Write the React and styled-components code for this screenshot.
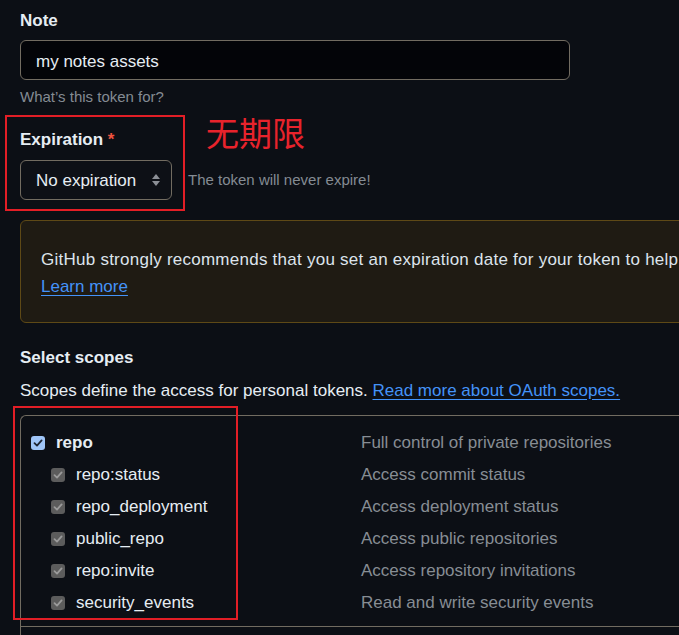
import styled, { createGlobalStyle } from "styled-components"

const GlobalStyle = createGlobalStyle`
    html, body {
        margin: 0;
        padding: 0;
        background: #0c0f15;
        overflow: hidden;
    }
    body {
        font-family: "Liberation Sans", Arial, sans-serif;
        color: #e6edf3;
    }
`;

const scopes = [
    { name: "repo:status", desc: "Access commit status" },
    { name: "repo_deployment", desc: "Access deployment status" },
    { name: "public_repo", desc: "Access public repositories" },
    { name: "repo:invite", desc: "Access repository invitations" },
    { name: "security_events", desc: "Read and write security events" },
]

function Check({ parent }) {
    return (
        <Box parent={parent}>
            <svg width="10" height="10" viewBox="0 0 10 10">
                <path d="M1.5 5.2 L4 7.6 L8.6 2.4" fill="none" stroke={parent ? "#1d2533" : "#9a9a9a"} strokeWidth="1.8" strokeLinecap="round" strokeLinejoin="round" />
            </svg>
        </Box>
    )
}

function App() {
    return (
        <Page>
            <GlobalStyle />
            <Label>Note</Label>
            <Input>my notes assets</Input>
            <Hint>What’s this token for?</Hint>

            <ExpirationRow>
                <Field>
                    <Label>Expiration <Star>*</Star></Label>
                    <Select>
                        No expiration
                        <svg width="10" height="14" viewBox="0 0 10 14">
                            <path d="M5 1 L9 6 H1 Z" fill="#8b8f96" />
                            <path d="M5 13 L9 8 H1 Z" fill="#8b8f96" />
                        </svg>
                    </Select>
                </Field>
                <Note>The token will never expire!</Note>
                <RedFrame style={{ left: -15, top: -14, width: 180, height: 96 }} />
                <Annotation>无期限</Annotation>
            </ExpirationRow>

            <Banner>
                <p>GitHub strongly recommends that you set an expiration date for your token to help keep your information secure.</p>
                <a href="#">Learn more</a>
            </Banner>

            <Label>Select scopes</Label>
            <Desc>Scopes define the access for personal tokens. <a href="#">Read more about OAuth scopes.</a></Desc>

            <Table>
                <Group>
                    <Row>
                        <Name>
                            <Check parent />
                            <strong>repo</strong>
                        </Name>
                        <Info>Full control of private repositories</Info>
                    </Row>
                    {scopes.map(s => (
                        <Row key={s.name}>
                            <Name sub>
                                <Check />
                                {s.name}
                            </Name>
                            <Info>{s.desc}</Info>
                        </Row>
                    ))}
                    <RedFrame style={{ left: -8, top: -10, width: 225, height: 214 }} />
                </Group>
                <Group />
            </Table>
        </Page>
    )
}

export default App

const Page = styled.div`
    padding: 10px 0 0 20px;
    width: 800px;
`;

const Label = styled.div`
    font-size: 17px;
    font-weight: 700;
    line-height: 22px;
    color: #e6edf3;
`;

const Star = styled.span`
    color: #f0533f;
`;

const Input = styled.div`
    margin-top: 8px;
    box-sizing: border-box;
    width: 550px;
    height: 40px;
    border: 1px solid #726c61;
    border-radius: 6px;
    background: #030408;
    padding: 3px 15px 0;
    display: flex;
    align-items: center;
    font-size: 17px;
`;

const Hint = styled.div`
    margin-top: 7px;
    font-size: 15px;
    color: #848b93;
    line-height: 20px;
`;

const ExpirationRow = styled.div`
    position: relative;
    margin-top: 22px;
    display: flex;
    align-items: flex-end;
    gap: 16px;
`;

const Field = styled.div`
    display: flex;
    flex-direction: column;
    gap: 9px;
`;

const Select = styled.div`
    box-sizing: border-box;
    width: 152px;
    height: 40px;
    border: 1px solid #726c61;
    border-radius: 6px;
    background: #0d1016;
    padding: 2px 10px 0 15px;
    display: flex;
    align-items: center;
    justify-content: space-between;
    font-size: 17px;
    svg {
        margin-top: -2px;
    }
`;

const Note = styled.div`
    font-size: 15px;
    color: #848b93;
    line-height: 20px;
    margin-bottom: 10px;
`;

const RedFrame = styled.div`
    position: absolute;
    box-sizing: border-box;
    border: 2px solid #e31e26;
    pointer-events: none;
`;

const Annotation = styled.div`
    position: absolute;
    left: 186px;
    top: -17px;
    font-family: "Noto Sans CJK SC", sans-serif;
    font-size: 33px;
    line-height: 40px;
    color: #e8232c;
`;

const Banner = styled.div`
    margin-top: 20px;
    margin-bottom: 24px;
    box-sizing: border-box;
    width: 780px;
    height: 103px;
    border: 1px solid #5e4916;
    border-radius: 6px;
    background: #1f1b13;
    padding: 25px 20px;
    font-size: 17px;
    line-height: 27px;
    p {
        margin: 0;
        white-space: nowrap;
        letter-spacing: 0.25px;
        color: #dde4ec;
    }
    a {
        color: #4493f8;
        text-decoration: underline;
        text-underline-offset: 3px;
    }
`;

const Desc = styled.div`
    margin-top: 11px;
    font-size: 17px;
    line-height: 22px;
    color: #e6edf3;
    a {
        color: #4493f8;
        text-decoration: underline;
        text-underline-offset: 3px;
    }
`;

const Table = styled.div`
    margin-top: 13px;
    width: 760px;
    border-top: 1px solid #726c61;
    border-left: 1px solid #726c61;
    border-radius: 6px 0 0 0;
`;

const Group = styled.div`
    position: relative;
    padding: 11px 0 7px 10px;
    border-bottom: 1px solid #726c61;
    min-height: 20px;
`;

const Row = styled.div`
    display: grid;
    grid-template-columns: 330px 1fr;
    height: 32px;
    align-items: center;
`;

const Name = styled.div`
    display: flex;
    align-items: center;
    gap: 11px;
    font-size: 17px;
    padding-left: ${props => props.sub ? "20px" : "0"};
    strong {
        font-weight: 700;
    }
`;

const Box = styled.span`
    box-sizing: border-box;
    width: 14px;
    height: 14px;
    border-radius: 3px;
    background: ${props => props.parent ? "#9fc5f8" : "#5c5c5c"};
    display: inline-flex;
    align-items: center;
    justify-content: center;
`;

const Info = styled.div`
    font-size: 17px;
    color: #878d94;
`;
